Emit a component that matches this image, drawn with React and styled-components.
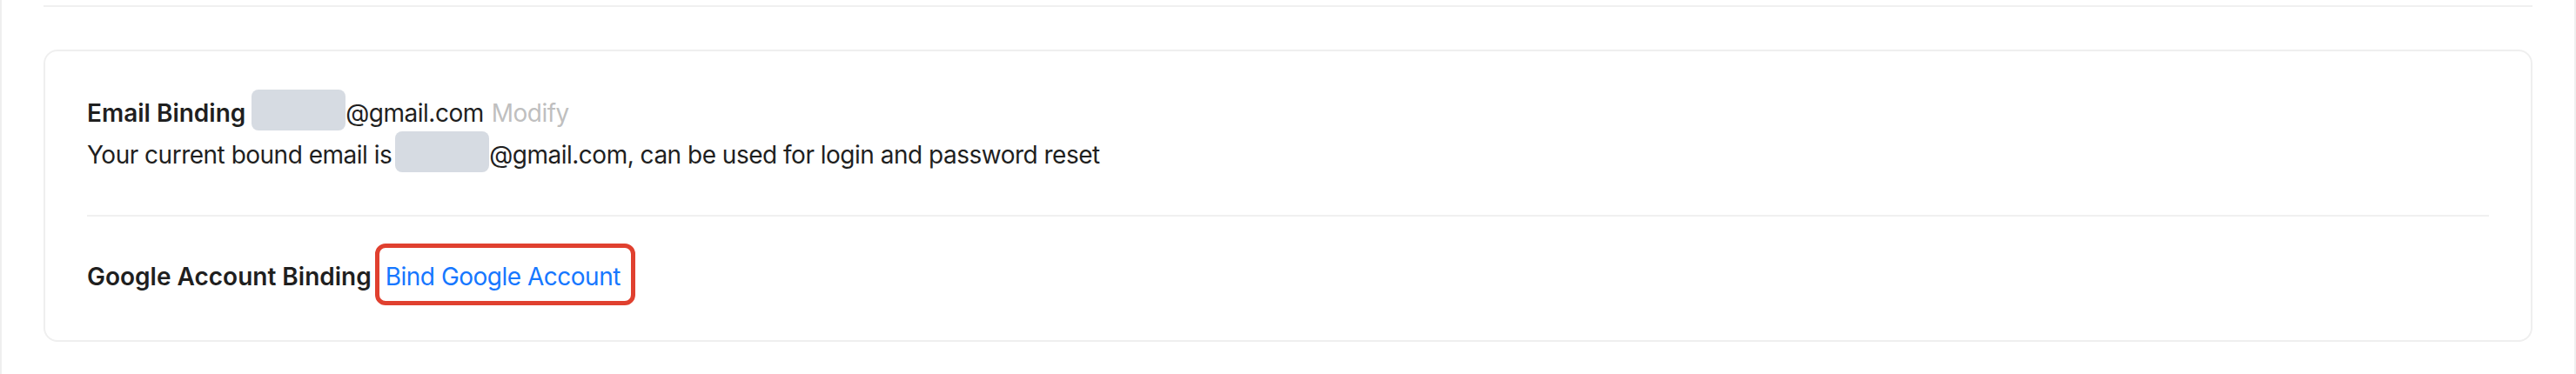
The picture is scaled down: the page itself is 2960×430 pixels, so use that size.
import React from "react";
import styled, { createGlobalStyle } from "styled-components";

const GlobalStyle = createGlobalStyle`
  body {
    margin: 0;
    background: #fff;
    font-family: Inter, "Noto Sans", "Liberation Sans", sans-serif;
    color: #1f1f1f;
  }
`;

const Frame = styled.div`
  height: 430px;
  box-sizing: border-box;
  border-left: 2px solid #efefef;
  border-right: 2px solid #efefef;
  padding: 6px 48px 0;
`;

const TopRule = styled.div`
  height: 2px;
  background: #f0f0f0;
  margin-bottom: 49px;
`;

const Card = styled.section`
  border: 2px solid #efefef;
  border-radius: 16px;
  padding: 47px 48px 40px;
  font-size: 28px;
  line-height: 48px;
  letter-spacing: -0.5px;
`;

const Line = styled.div`
  white-space: nowrap;
`;

const Label = styled.span`
  font-weight: 600;
  letter-spacing: 0;
`;

/* masked part of the address */
const Redacted = styled.span`
  display: inline-block;
  width: 108px;
  height: 47px;
  margin-top: -3px;
  border-radius: 8px;
  background: #d6dbe2;
  vertical-align: -10px;
  margin-left: ${(p) => p.$gap || 0}px;
`;

const Muted = styled.a`
  color: #bfbfbf;
  margin-left: 9px;
  text-decoration: none;
  cursor: pointer;
`;

const Divider = styled.hr`
  border: 0;
  height: 2px;
  background: #f0f0f0;
  margin: 45px 0 31px;
`;

const Row = styled.div`
  display: flex;
  align-items: baseline;
`;

const BindLink = styled.a`
  color: #1677ff;
  text-decoration: none;
  border: 5px solid #e0402f;
  border-radius: 12px;
  padding: 9px 12px 4px 7px;
  margin-left: 4px;
  cursor: pointer;
`;

export default function App() {
  return (
    <>
      <GlobalStyle />
      <Frame>
        <TopRule />
        <Card>
          <Line>
            <Label>Email Binding</Label>
            <Redacted $gap={7} />
            @gmail.com
            <Muted>Modify</Muted>
          </Line>
          <Line>
            Your current bound email is
            <Redacted $gap={4} />
            @gmail.com, can be used for login and password reset
          </Line>
          <Divider />
          <Row>
            <Label>Google Account Binding</Label>
            <BindLink>Bind Google Account</BindLink>
          </Row>
        </Card>
      </Frame>
    </>
  );
}
